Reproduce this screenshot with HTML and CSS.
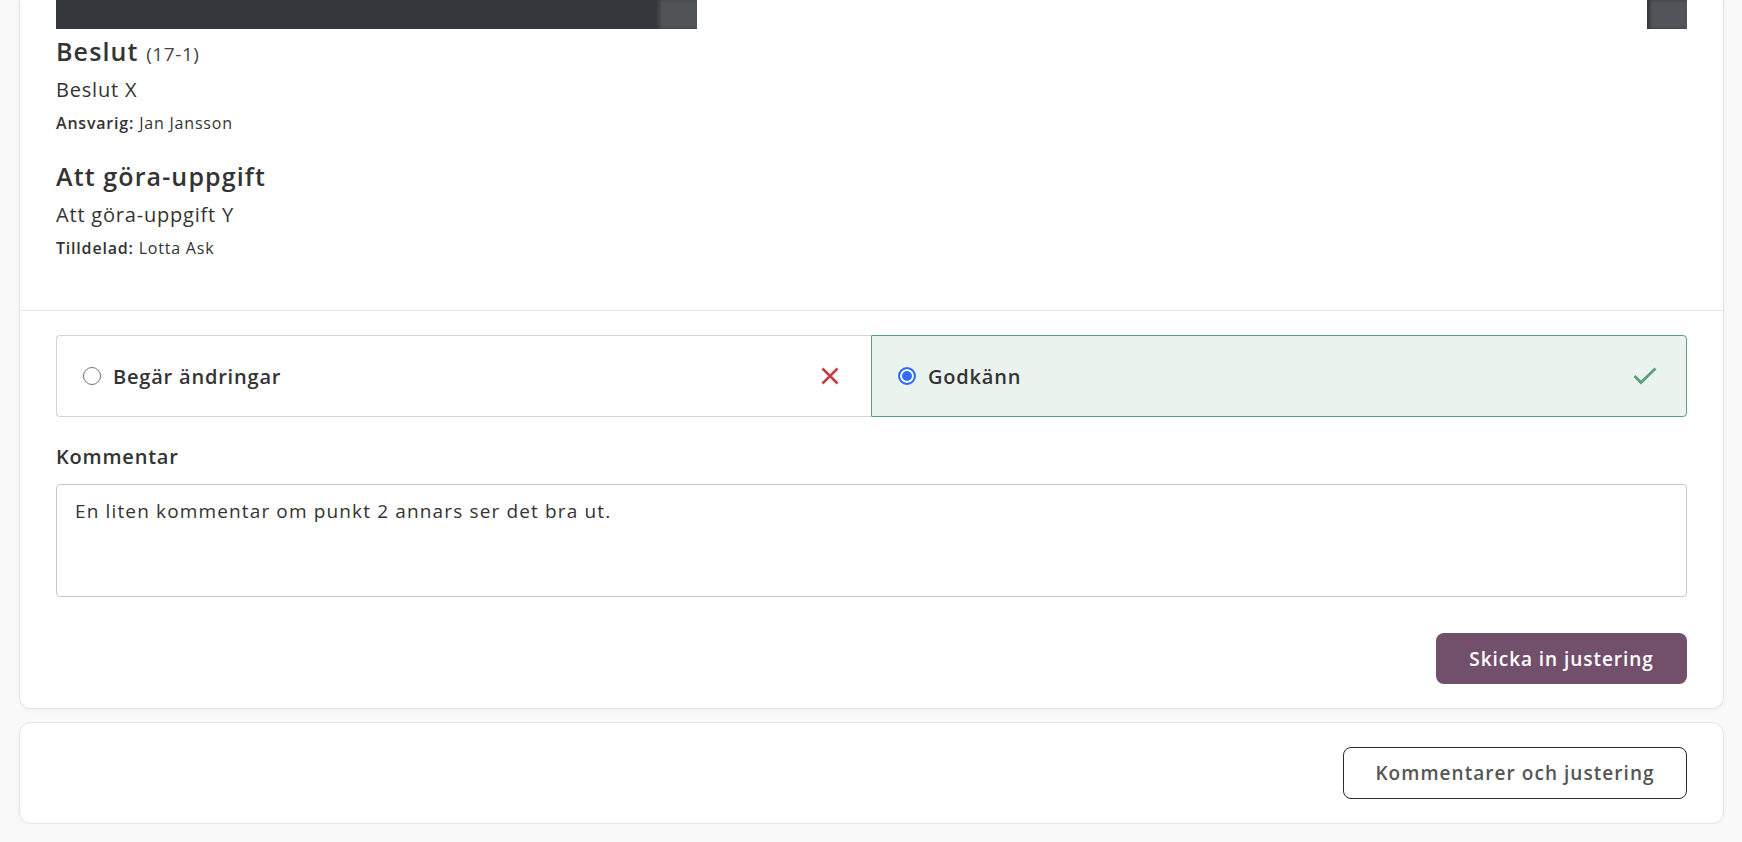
FILE: index.html
```html
<!DOCTYPE html>
<html lang="sv">
<head>
    <meta charset="UTF-8">
    <meta name="viewport" content="width=device-width, initial-scale=1.0">
    <link rel="stylesheet" href="styles.css">
</head>
<body>
    <div class="page">
        <section class="card review-card">
            <div class="card-top">
                <div class="carousel">
                    <div class="slide"></div>
                    <div class="slide-next"></div>
                    <div class="carousel-spacer"></div>
                    <div class="carousel-btn"></div>
                </div>

                <div class="item">
                    <h3 class="item-title">Beslut <span class="item-count">(17-1)</span></h3>
                    <p class="item-name">Beslut X</p>
                    <p class="item-meta"><b>Ansvarig:</b> Jan Jansson</p>
                </div>

                <div class="item item-todo">
                    <h3 class="item-title">Att göra-uppgift</h3>
                    <p class="item-name">Att göra-uppgift Y</p>
                    <p class="item-meta"><b>Tilldelad:</b> Lotta Ask</p>
                </div>
            </div>

            <form class="card-form">
                <div class="choice-group">
                    <label class="choice">
                        <input type="radio" name="decision" value="changes">
                        <span class="choice-text">Begär ändringar</span>
                        <svg class="choice-icon" width="24" height="18" viewBox="0 0 24 18">
                            <path d="M4.5 1.5 L19.5 16.5 M19.5 1.5 L4.5 16.5" stroke="#b8414a" stroke-width="2.6" fill="none"/>
                        </svg>
                    </label>
                    <label class="choice choice-selected">
                        <input type="radio" name="decision" value="approve" checked>
                        <span class="choice-text">Godkänn</span>
                        <svg class="choice-icon" width="24" height="18" viewBox="0 0 24 18">
                            <path d="M1.5 9 L8 15.5 L22.5 1.5" stroke="#5b9f7b" stroke-width="2.8" fill="none"/>
                        </svg>
                    </label>
                </div>

                <label class="field-label" for="comment">Kommentar</label>
                <textarea id="comment" class="comment" rows="4">En liten kommentar om punkt 2 annars ser det bra ut.</textarea>

                <div class="form-actions">
                    <button type="submit" class="btn btn-primary">Skicka in justering</button>
                </div>
            </form>
        </section>

        <section class="card footer-card">
            <button class="btn btn-outline">Kommentarer och justering</button>
        </section>
    </div>
</body>
</html>
```

FILE: styles.css
```css
* {
    box-sizing: border-box;
}
body {
    font-family: 'Open Sans', 'Noto Sans', sans-serif;
    margin: 0;
    padding: 0;
    background-color: #f9f9f9;
    color: #333;
    letter-spacing: 0.05em;
}
.page {
    padding: 0 18px 0 19px;
}
.card {
    background: #ffffff;
    border: 1px solid #e4e4e4;
    border-radius: 12px;
    box-shadow: 0 2px 4px rgba(0, 0, 0, 0.03);
}
.review-card {
    border-top: none;
    border-radius: 0 0 12px 12px;
}
.card-top {
    padding: 0 36px 52px 36px;
    border-bottom: 1px solid #e6e6e6;
}
.carousel {
    display: flex;
    height: 29px;
}
.slide {
    width: 601px;
    background: #34373b;
}
.slide-next {
    width: 40px;
    background: #505356;
    box-shadow: inset 3px 0 3px rgba(0, 0, 0, 0.25);
}
.carousel-spacer {
    flex: 1;
}
.carousel-btn {
    width: 40px;
    background: #515458;
    box-shadow: inset 3px 0 3px rgba(0, 0, 0, 0.35);
}
.item-title {
    margin: 7px 0 0 0;
    font-size: 25px;
    line-height: 30px;
    font-weight: 600;
    color: #333;
    letter-spacing: 0.045em;
}
.item-count {
    font-size: 19px;
    font-weight: normal;
    color: #444;
    letter-spacing: 0.03em;
}
.item-todo .item-title {
    margin-top: 28px;
}
.item-name {
    margin: 8px 0 0 0;
    font-size: 20px;
    line-height: 26px;
}
.item-todo .item-name {
    margin-top: 11px;
}
.item-meta {
    margin: 10px 0 0 0;
    font-size: 16px;
    line-height: 20px;
}
.item-meta b {
    font-weight: 600;
}
.card-form {
    padding: 24px 36px 24px 36px;
}
.choice-group {
    display: flex;
}
.choice {
    flex: 1;
    display: flex;
    align-items: center;
    height: 82px;
    padding: 0 29px 0 26px;
    border: 1px solid #d4d4d4;
    cursor: pointer;
}
.choice:first-child {
    border-radius: 4px 0 0 4px;
    border-right: none;
}
.choice:last-child {
    border-radius: 0 4px 4px 0;
}
.choice-selected {
    background: #eaf3ee;
    border-color: #5b9f7b;
}
.choice input {
    appearance: none;
    width: 18px;
    height: 18px;
    margin: 0 12px 0 0;
    border: 1.5px solid #767676;
    border-radius: 50%;
    background: #fff;
}
.choice input:checked {
    border: 2px solid #2f6ff5;
    box-shadow: inset 0 0 0 2px #fff;
    background: #2f6ff5;
}
.choice-text {
    flex: 1;
    font-size: 20px;
    font-weight: 600;
    color: #333;
}
.field-label {
    display: block;
    margin-top: 28px;
    font-size: 20px;
    line-height: 24px;
    font-weight: 600;
    color: #333;
}
.comment {
    display: block;
    width: 100%;
    height: 113px;
    margin-top: 15px;
    padding: 14px 18px;
    border: 1px solid #c8c8c8;
    border-radius: 4px;
    font-family: 'Open Sans', 'Noto Sans', sans-serif;
    font-size: 19px;
    line-height: 24px;
    letter-spacing: 0.06em;
    color: #333;
    resize: none;
}
.form-actions {
    display: flex;
    justify-content: flex-end;
    margin-top: 36px;
}
.btn {
    font-family: 'Open Sans', 'Noto Sans', sans-serif;
    font-size: 19px;
    font-weight: 600;
    letter-spacing: 0.05em;
    border-radius: 8px;
    cursor: pointer;
}
.btn-primary {
    width: 251px;
    height: 51px;
    background: #72506c;
    color: #ffffff;
    border: none;
}
.footer-card {
    display: flex;
    justify-content: flex-end;
    margin-top: 13px;
    padding: 24px 36px 24px 36px;
}
.btn-outline {
    width: 344px;
    height: 52px;
    background: #ffffff;
    color: #555;
    border: 1px solid #2a2a2a;
    letter-spacing: 0.055em;
}
```
